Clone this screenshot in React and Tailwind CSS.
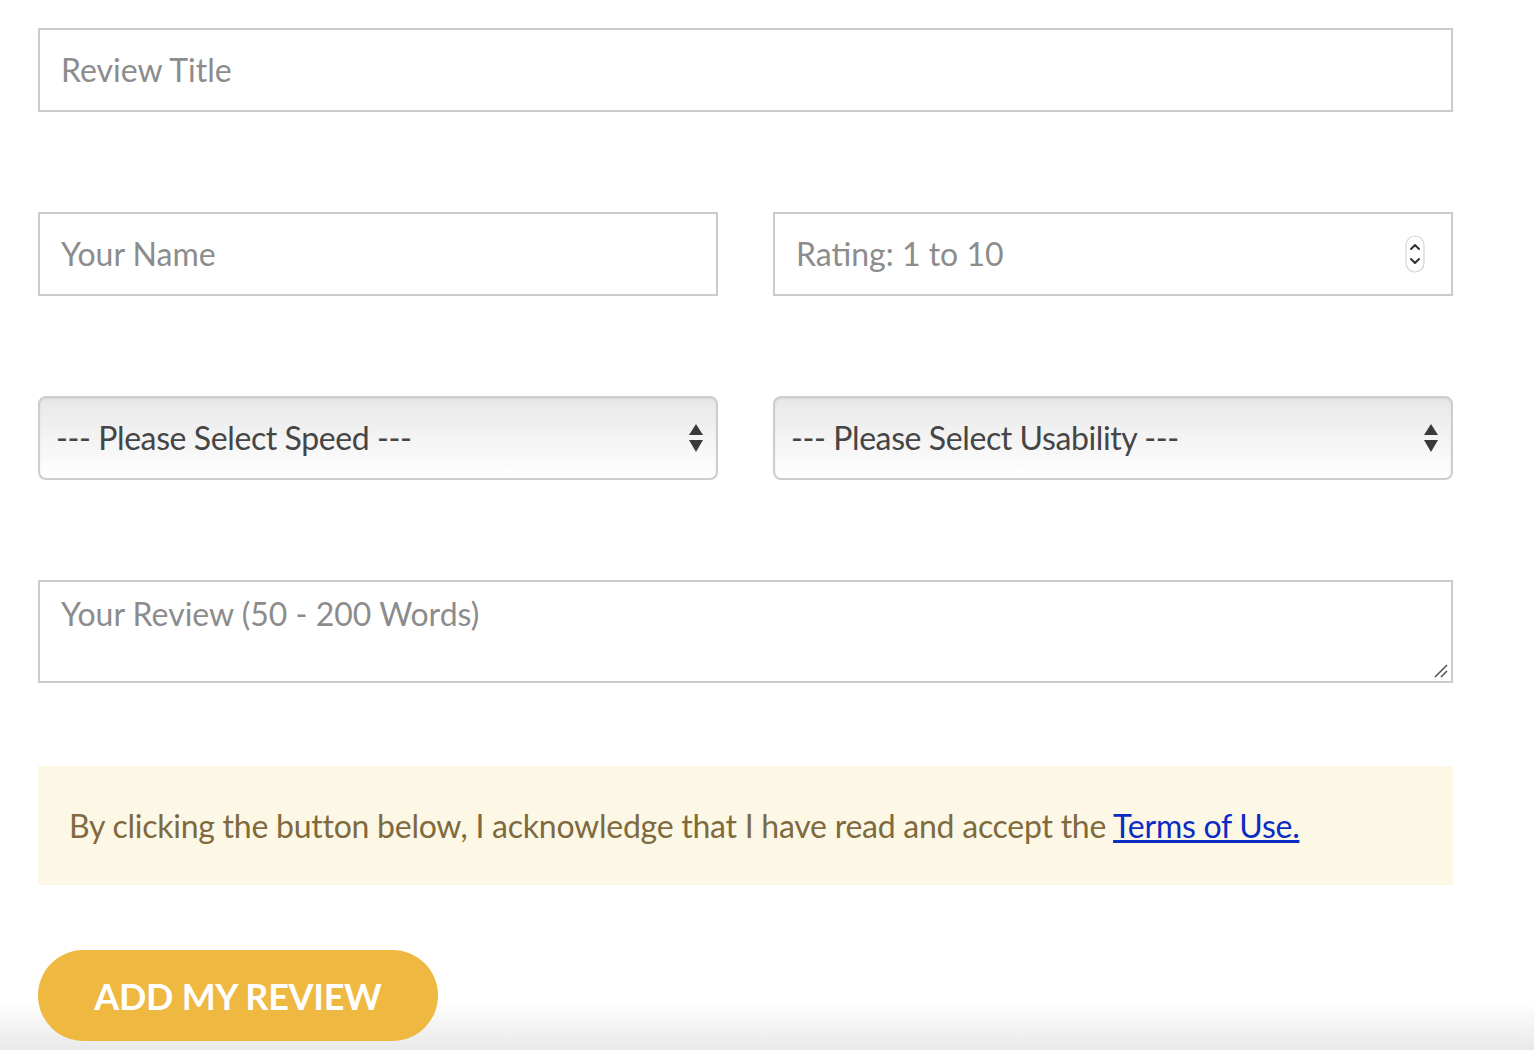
const lato = { fontFamily: 'Lato, "Open Sans", sans-serif' }

function Field({ children, className = '' }) {
  return (
    <div className={`flex items-center h-[84px] border-2 border-[#cbcbcb] bg-white px-[21px] text-[32px] text-[#8c8c8c] ${className}`}>
      {children}
    </div>
  )
}

function SelectBox({ label }) {
  return (
    <div className="w-[680px] flex items-center justify-between h-[84px] rounded-[8px] border-2 border-[#cdcdcd] bg-gradient-to-b from-[#e8e8e8] to-[#ffffff] pl-[16px] pr-[12px] text-[32px] tracking-[-0.4px] text-[#454545] shadow-[inset_0_1px_2px_rgba(0,0,0,0.08)]">
      <span>{label}</span>
      <svg width="16" height="32" viewBox="0 0 16 32">
        <path d="M8 2 L15 13 L1 13 Z" fill="#3a3a3a" />
        <path d="M1 18 L15 18 L8 30 Z" fill="#3a3a3a" />
      </svg>
    </div>
  )
}

export default function App() {
  return (
    <div className="w-[1534px] h-[1050px] overflow-hidden bg-white" style={lato}>
      <div className="w-[1415px] ml-[38px] pt-[28px] flex flex-col">
        <Field>Review Title</Field>

        <div className="flex gap-[55px] mt-[100px]">
          <Field className="w-[680px]">Your Name</Field>
          <Field className="w-[680px] justify-between pr-[26px]">
            <span>Rating: 1 to 10</span>
            <svg width="20" height="38" viewBox="0 0 20 38">
              <rect x="1" y="1" width="18" height="36" rx="9" fill="white" stroke="#d4d4d4" strokeWidth="1.2" />
              <path d="M6 14 L10 10 L14 14" fill="none" stroke="#333" strokeWidth="2" strokeLinecap="round" strokeLinejoin="round" />
              <path d="M6 24 L10 28 L14 24" fill="none" stroke="#333" strokeWidth="2" strokeLinecap="round" strokeLinejoin="round" />
            </svg>
          </Field>
        </div>

        <div className="flex gap-[55px] mt-[100px]">
          <SelectBox label="--- Please Select Speed ---" />
          <SelectBox label="--- Please Select Usability ---" />
        </div>

        <div className="relative mt-[100px] h-[103px] border-2 border-[#cbcbcb] bg-white px-[21px] pt-[8px] text-[32px] leading-[48px] text-[#8c8c8c]">
          Your Review (50 - 200 Words)
          <svg className="absolute right-[2px] bottom-[2px]" width="16" height="16" viewBox="0 0 16 16">
            <path d="M2 14 L14 2" stroke="#555" strokeWidth="1.6" />
            <path d="M8 14 L14 8" stroke="#555" strokeWidth="1.6" />
          </svg>
        </div>

        <div className="mt-[83px] h-[119px] flex items-center bg-[#fcf8e5] px-[31px] text-[32px] tracking-[-0.25px] text-[#7f6a40]">
          <p>
            By clicking the button below, I acknowledge that I have read and accept the{' '}
            <a className="text-[#0a2bc4] underline">Terms of Use.</a>
          </p>
        </div>
      </div>

      <div className="mt-[65px] h-[100px] bg-gradient-to-b from-[#ffffff] via-[#ffffff] to-[#e9e9e9] pl-[38px]">
        <button className="w-[400px] h-[91px] rounded-full bg-[#efb841] text-white text-[36px] font-bold tracking-[-0.3px]" style={lato}>
          ADD MY REVIEW
        </button>
      </div>
    </div>
  )
}
